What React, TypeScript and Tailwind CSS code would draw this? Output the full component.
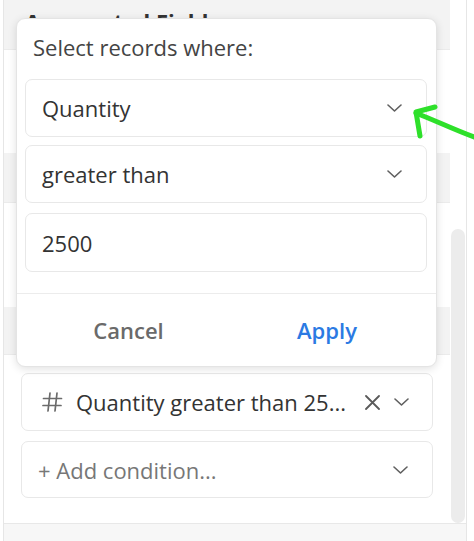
import React from "react";

const Chevron = ({ className = "" }: { className?: string }) => (
  <svg width="15" height="8" viewBox="0 0 15 8" fill="none" className={className}>
    <path d="M1 1l6.5 6L14 1" stroke="#5f5f5f" strokeWidth="1.6" strokeLinecap="round" strokeLinejoin="round" />
  </svg>
);

const Hash = () => (
  <svg width="21" height="20" viewBox="0 0 21 20" fill="none">
    <path d="M8 1L6 19M15 1l-2 18M1.5 6.5h18M1 13.5h18" stroke="#6b6b6b" strokeWidth="1.7" strokeLinecap="round" />
  </svg>
);

const Cross = () => (
  <svg width="17" height="15" viewBox="0 0 17 15" fill="none">
    <path d="M2 1l13 13M15 1L2 14" stroke="#5a5a5a" strokeWidth="1.8" strokeLinecap="round" />
  </svg>
);

const SelectBox = ({ label, chevron = true, height = "h-[58px]" }: { label: string; chevron?: boolean; height?: string }) => (
  <div className={`flex ${height} items-center justify-between rounded-[7px] border border-[#e8e8e8] bg-white pl-[16px] pr-[24px]`}>
    <span className="text-[22px] leading-[30px] text-[#333]">{label}</span>
    {chevron && <Chevron />}
  </div>
);

const FilterPopover = () => (
  <div className="absolute left-[16px] top-[18px] flex h-[349px] w-[421px] flex-col rounded-[9px] border border-[#e4e4e4] bg-white shadow-[0_2px_8px_rgba(0,0,0,0.12)]">
    <div className="pl-[16px] pt-[13px] text-[22px] leading-[30px] text-[#444]">Select records where:</div>
    <div className="mt-[17px] flex flex-col pl-[8px] pr-[9px]">
      <SelectBox label="Quantity" />
      <div className="mt-[8px]">
        <SelectBox label="greater than" />
      </div>
      <div className="mt-[10px]">
        <SelectBox label="2500" chevron={false} height="h-[59px]" />
      </div>
    </div>
    <div className="mt-[21px] flex flex-1 items-center border-t border-[#ececec] pl-[13px]">
      <button className="w-[197px] text-center text-[22px] font-semibold text-[#6a6a6a]">Cancel</button>
      <button className="w-[200px] text-center text-[22px] font-semibold text-[#2b7ae3]">Apply</button>
    </div>
  </div>
);

export default function App() {
  return (
    <div className="relative h-[541px] w-[474px] overflow-hidden bg-white font-['Open_Sans',sans-serif]">
      <div className="ml-[3px] flex h-full w-[464px] flex-col border-l border-r border-[#e6e6e6]">
        <div className="flex h-[523px]">
          <div className="flex w-[446px] flex-col">
            <div className="h-[50px] border-b border-[#ebebeb] bg-[#f3f3f3] pl-[21px] pt-[6px] text-[22px] font-bold leading-[30px] text-[#333]">
              Aggregated Fields
            </div>
            <div className="h-[103px]" />
            <div className="h-[50px] border-b border-[#ebebeb] bg-[#f3f3f3]" />
            <div className="h-[104px]" />
            <div className="h-[48px] border-b border-[#ebebeb] bg-[#f3f3f3]" />
            <div className="flex flex-col gap-[10px] px-[17px] pt-[18px]">
              <div className="flex h-[58px] items-center rounded-[7px] border border-[#e8e8e8] bg-white pl-[20px] pr-[23px]">
                <Hash />
                <span className="ml-[13px] flex-1 text-[22px] leading-[30px] text-[#333]">Quantity greater than 25...</span>
                <Cross />
                <Chevron className="ml-[13px]" />
              </div>
              <div className="flex h-[57px] items-center justify-between rounded-[7px] border border-[#e8e8e8] bg-white pl-[16px] pr-[24px]">
                <span className="text-[22px] leading-[30px] text-[#777]">+ Add condition...</span>
                <Chevron />
              </div>
            </div>
          </div>
          <div className="w-[16px] pt-[229px]">
            <div className="mx-auto h-[294px] w-[14px] rounded-full bg-[#ececec]" />
          </div>
        </div>
        <div className="flex-1 border-t border-[#e8e8e8] bg-[#f7f7f7]" />
      </div>

      <FilterPopover />

      <svg className="absolute left-0 top-0" width="474" height="541" viewBox="0 0 474 541" fill="none">
        <path d="M474 137C455 130 436 121 416 113" stroke="#2ee02a" strokeWidth="5" strokeLinecap="round" />
        <path d="M435 107L416 112L420 136" stroke="#2ee02a" strokeWidth="5" strokeLinecap="round" strokeLinejoin="round" />
      </svg>
    </div>
  );
}
